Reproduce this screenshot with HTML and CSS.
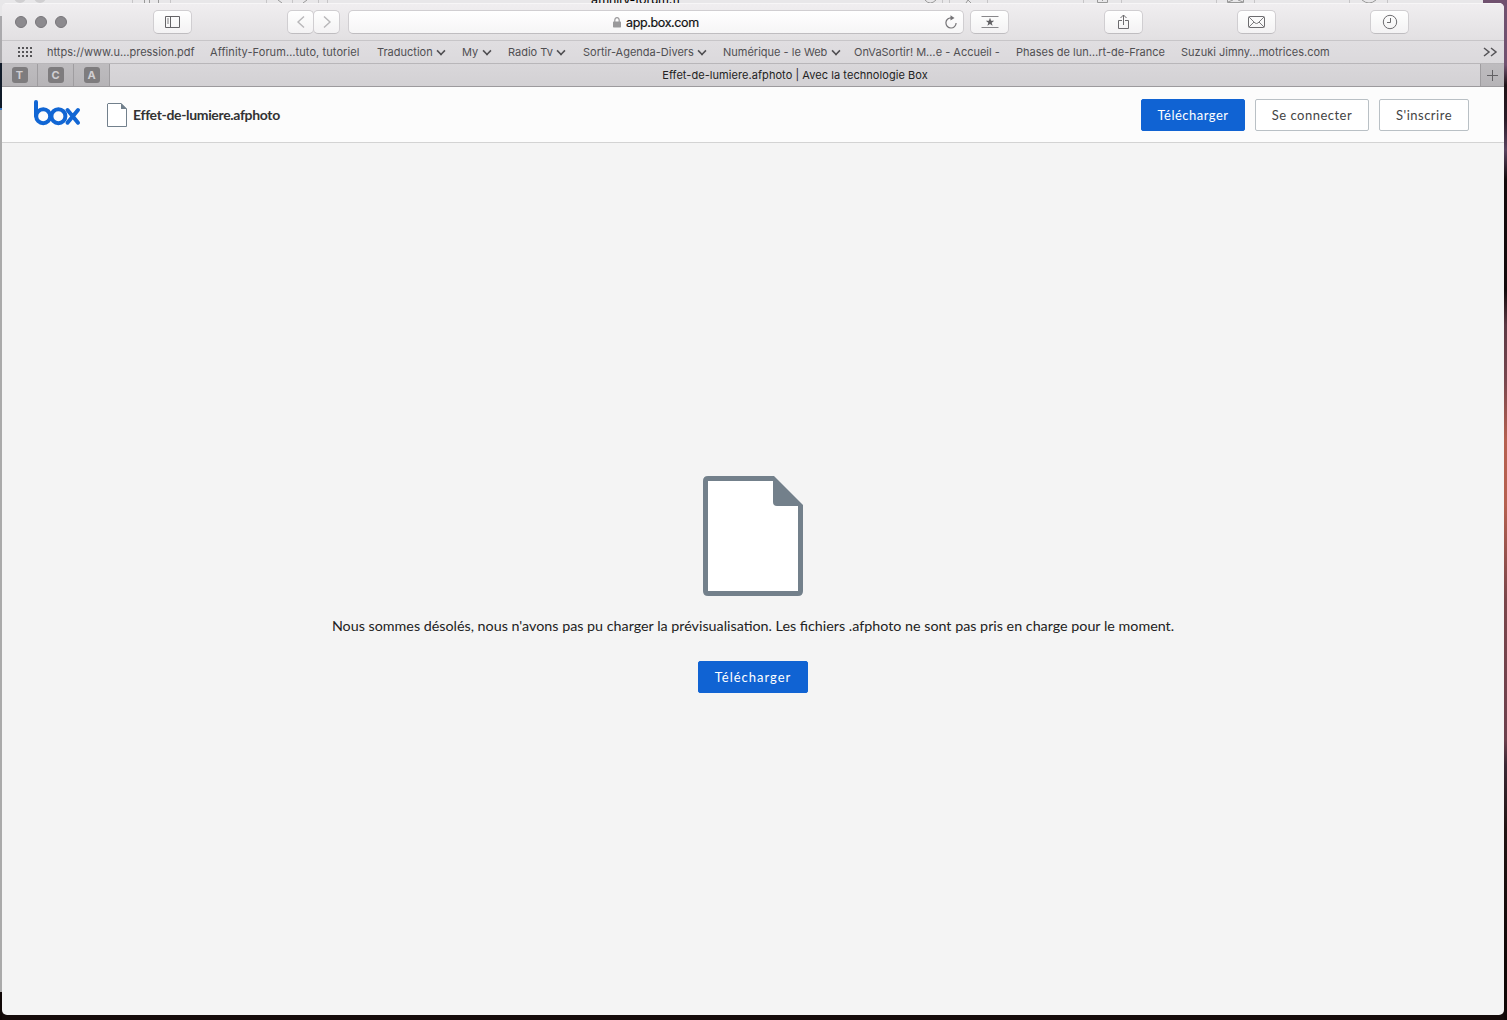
FILE: index.html
```html
<!DOCTYPE html>
<html lang="fr">
<head>
<meta charset="utf-8">
<title>Effet-de-lumiere.afphoto | Avec la technologie Box</title>
<link rel="stylesheet" href="styles.css">
</head>
<body>
<div class="behind">
  <span class="behind-address">affinity-forum.fr</span>
  <svg class="behind-controls" width="1483" height="3" fill="none" stroke="#777">
    <g fill="#d0cfd1" stroke="none"><circle cx="20" cy="-3" r="6"/><circle cx="40" cy="-3" r="6"/></g>
    <path d="M132.500 0V3M170.500 0V3M266.500 0V3M292.500 0V3M318.500 0V3M327.500 0V3M942.500 0V3M949.500 0V3M987.500 0V3M1083.500 0V3M1121.500 0V3M1216.500 0V3M1254.500 0V3M1349.500 0V3M1387.500 0V3" stroke="#c6c5c7"/>
    <path d="M144.500 0V3M149.500 0V3M158.500 0V3M278 0L282 3M307 0L303 3M925 0Q930 6 936 0M966 3L968 0L971 3M1097.500 0V2.500H1107.500V0M1102.500 0V1M1227.500 0V2.500H1243.500V0M1228 2L1233 0M1243 2L1238 0M1362 0Q1369 6 1376 0" stroke="#999"/>
  </svg>
</div>
<div class="window">
  <div class="toolbar">
    <div class="lights"><i></i><i></i><i></i></div>
    <div class="tool sidebar"><svg width="16" height="14" fill="none" stroke="#646366"><path d="M.5 1.500H14.500V12.500H.5ZM5.500 1.500V12.500"/><path d="M2 4H4M2 6H4M2 8H4" stroke-width=".8"/></svg></div>
    <div class="history">
      <div class="tool nav"><svg width="10" height="14" fill="none" stroke="#b8b7b9" stroke-width="1.400"><path d="M8 1.500L2 7L8 12.500"/></svg></div>
      <div class="tool nav"><svg width="10" height="14" fill="none" stroke="#b8b7b9" stroke-width="1.400"><path d="M2 1.500L8 7L2 12.500"/></svg></div>
    </div>
    <div class="address">
      <svg width="8" height="11"><path d="M1.800 5V3.200Q1.800 .7 4 .7T6.200 3.200V5" fill="none" stroke="#9a999b" stroke-width="1.200"/><rect y="4.500" width="8" height="6" rx=".7" fill="#9a999b"/></svg>
      <span>app.box.com</span>
      <svg class="reload" width="14" height="15" fill="none" stroke="#747376" stroke-width="1.200"><path d="M7 2.800A5.100 5.100 0 1 0 12.100 8"/><path d="M6.500 .3L10.500 3L6.500 5.600Z" fill="#747376" stroke="none"/></svg>
    </div>
    <div class="tool star"><svg width="18" height="14"><path d="M.5 1.500H17.500M.5 12.500H17.500" stroke="#88878a"/><path d="M9 2.800L10.100 5.800H13.200L10.700 7.700L11.600 10.800L9 9L6.400 10.800L7.300 7.700L4.800 5.800H7.900Z" fill="#626164"/></svg></div>
    <div class="tool share"><svg width="11" height="16" fill="none" stroke="#6d6c6f"><path d="M4 6.500H.5V14.500H10.500V6.500H7M5.500 11V1M2.500 4L5.500 1L8.500 4"/></svg></div>
    <div class="tool mail"><svg width="18" height="14" fill="none" stroke="#6d6c6f"><rect x=".5" y="1.500" width="16" height="11" rx="1"/><path d="M1 2L7 8Q8.500 9 10 8L16 2M1 12L6 7M16 12L11 7" stroke-width=".9"/></svg></div>
    <div class="tool clock"><svg width="16" height="16" fill="none" stroke="#6d6c6f"><circle cx="8" cy="8" r="6.700"/><path d="M8.500 4V8.500H5"/></svg></div>
  </div>
  <div class="bookmarks">
    <svg class="dots" width="15" height="12" stroke="#555457" stroke-width="2" stroke-dasharray="2 2"><path d="M0 2H14M0 6H14M0 10H14"/></svg>
    <span>https://www.u…pression.pdf</span>
    <span class="forum">Affinity-Forum…tuto, tutoriel</span>
    <span class="menu">Traduction</span>
    <span class="menu">My</span>
    <span class="menu">Radio Tv</span>
    <span class="menu">Sortir-Agenda-Divers</span>
    <span class="menu">Numérique - le Web</span>
    <span>OnVaSortir! M…e - Accueil -</span>
    <span>Phases de lun…rt-de-France</span>
    <span>Suzuki Jimny…motrices.com</span>
    <svg class="more" width="15" height="10" fill="none" stroke="#555457" stroke-width="1.500"><path d="M1 1L6 5L1 9M8 1L13 5L8 9"/></svg>
  </div>
  <div class="tabs">
    <div class="pin"><b>T</b></div><div class="pin"><b>C</b></div><div class="pin"><b>A</b></div>
    <div class="active-tab"><span>Effet-de-lumiere.afphoto | Avec la technologie Box</span></div>
    <div class="add-tab"><svg width="11" height="11" stroke="#626164"><path d="M0 5.500H11M5.500 0V11"/></svg></div>
  </div>
  <header class="box-header">
    <svg class="logo" width="48" height="28" fill="none" stroke="#1166d4" stroke-width="4" stroke-linecap="round"><path d="M3 3V17"/><circle cx="10.200" cy="17.200" r="7"/><circle cx="25.400" cy="17.200" r="7"/><path d="M34.500 11L45 23.700M45 11L34.500 23.700"/></svg>
    <svg class="file-small" width="20" height="24"><path d="M1 .5H14L19.500 6V23.500H.5V1Z" fill="#fff" stroke="#72808c"/><path d="M14 0L20 6H14Z" fill="#72808c"/></svg>
    <span class="file-name">Effet-de-lumiere.afphoto</span>
    <button class="btn primary download">Télécharger</button>
    <button class="btn login">Se connecter</button>
    <button class="btn signup">S'inscrire</button>
  </header>
  <main class="preview">
    <svg width="100" height="120"><path d="M5 0H71L100 29V115Q100 120 95 120H5Q0 120 0 115V5Q0 0 5 0Z" fill="#73808b"/><path d="M5 5H70V26Q70 30 74 30H95V115H5Z" fill="#fff"/></svg>
    <p class="message">Nous sommes désolés, nous n'avons pas pu charger la prévisualisation. Les fichiers .afphoto ne sont pas pris en charge pour le moment.</p>
    <button class="btn primary center">Télécharger</button>
  </main>
</div>
</body>
</html>
```
FILE: styles.css
```css
* { box-sizing: border-box; }
body {
  margin: 0;
  width: 1507px;
  height: 1020px;
  overflow: hidden;
  position: relative;
  padding: 3px 3px 5px 2px;
  font-family: Inter, "Liberation Sans", sans-serif;
  background:
    linear-gradient(#aaa9ac 0 63px, #101b29 63px 108px, #3c78bd 108px 110px, #aaa 110px 992px, #100706 992px) 0 0 / 2px 100% no-repeat,
    linear-gradient(#70516f 0, #70516f 65px, #201317 85px, #2b1c28 120px, #5a4460 150px, #130a0b 180px, #130a0b 290px, #5b3843 325px, #78464e 380px, #b5604f 440px, #b5604f 505px, #7a454a 600px, #6c3f4c 740px, #3b2834 765px, #211312 830px, #100706 960px) 100% 0 / 3px 100% no-repeat,
    linear-gradient(#70516f 0 16px, #150b0a 16px);
}
svg { display: block; flex: none; }
.behind {
  position: absolute;
  top: 0;
  left: 0;
  width: 1483px;
  height: 16px;
  background: #e8e7e9;
}
.behind-controls { position: absolute; top: 0; left: 0; }
.behind-address {
  position: absolute;
  top: -8px;
  left: 591px;
  font-size: 12.5px;
  line-height: 15px;
  letter-spacing: -.2px;
}
.window {
  position: relative;
  width: 1502px;
  height: 1012px;
  overflow: hidden;
  border-radius: 5px;
  background: #f4f4f4;
  display: flex;
  flex-direction: column;
}
.toolbar {
  height: 38px;
  flex: none;
  display: flex;
  align-items: center;
  padding-left: 13px;
  background: linear-gradient(#f0eef0, #e2e0e2);
  border-top: 1px solid #f7f6f7;
  border-bottom: 1px solid #c7c5c8;
}
.lights { display: flex; gap: 8px; width: 138px; }
.lights i { width: 12px; height: 12px; border-radius: 50%; background: #8c8a8e; border: 1px solid #777579; }
.tool {
  width: 39px;
  height: 24px;
  border: 1px solid #d0ced1;
  border-bottom-color: #bfbdc0;
  border-radius: 5px;
  background: linear-gradient(#fff, #f3f2f3);
  display: flex;
  align-items: center;
  justify-content: center;
}
.history { display: flex; margin-left: 95px; }
.nav { width: 27px; }
.nav + .nav { margin-left: -1px; }
.address {
  width: 616px;
  height: 24px;
  margin-left: 8px;
  padding: 0 5px 0 264px;
  display: flex;
  align-items: center;
  gap: 5px;
  border: 1px solid #d0ced1;
  border-bottom-color: #bfbdc0;
  border-radius: 5px;
  background: linear-gradient(#fff, #f6f5f6);
  font-size: 12.5px;
  color: #111;
}
.address span { width: 73px; white-space: nowrap; letter-spacing: -.36px; -webkit-text-stroke: .2px #111; }
.reload { margin-left: auto; }
.star { margin-left: 6px; }
.share { margin-left: 95px; }
.mail { margin-left: 94px; }
.clock { margin-left: 94px; }
.bookmarks {
  height: 23px;
  flex: none;
  display: grid;
  grid-template-columns: 30px 163px 167px 85px 46px 75px 140px 131px 162px 165px 1fr 21px;
  align-items: center;
  padding-left: 15px;
  background: linear-gradient(#e0dee1, #dbd9dc);
  border-bottom: 1px solid #b8b6b9;
  font-size: 11px;
  line-height: 14px;
  color: #504f52;
  white-space: nowrap;
}
.dots { margin-left: 1px; }
.forum { letter-spacing: .09px; }
.menu { display: flex; align-items: center; gap: 5px; }
.menu::after {
  content: "";
  width: 6px;
  height: 6px;
  margin: -3px 0 0 -.5px;
  border: solid #504f52;
  border-width: 0 2px 2px 0;
  transform: rotate(45deg) scale(.8);
}
.tabs {
  height: 23px;
  flex: none;
  display: flex;
  background: linear-gradient(#d9d7da, #d3d1d4);
  border-bottom: 1px solid #9c9a9d;
}
.pin, .add-tab { display: flex; align-items: center; justify-content: center; background: linear-gradient(#bebcbf, #b6b4b7); }
.pin { width: 36px; border-right: 1px solid #9f9da0; }
.pin b {
  width: 16px;
  height: 16px;
  border-radius: 3px;
  background: #7e7c7e;
  color: #d0ced1;
  font-size: 11px;
  line-height: 16px;
  text-align: center;
}
.active-tab { flex: 1; display: flex; align-items: center; justify-content: center; font-size: 11px; letter-spacing: .06px; color: #222; }
.add-tab { width: 24px; border-left: 1px solid #9f9da0; }
.box-header {
  height: 56px;
  flex: none;
  display: flex;
  align-items: center;
  padding: 0 35px 0 31px;
  background: #fcfcfc;
  border-bottom: 1px solid #d3d3d3;
  font-family: Lato, sans-serif;
}
.logo { margin-top: -3px; }
.file-small { margin-left: 26px; }
.file-name { margin-left: 6px; font-size: 14px; font-weight: 700; letter-spacing: -.34px; color: #333; white-space: nowrap; }
.btn {
  height: 32px;
  padding: 0;
  border: 1px solid #b9c0c5;
  border-radius: 2px;
  background: #fff;
  font: 13px Lato, sans-serif;
  letter-spacing: .5px;
  color: #444;
  white-space: nowrap;
}
.primary { background: #1063d3; border-color: #1063d3; color: #fff; }
.download { width: 104px; margin-left: auto; }
.login { width: 114px; margin-left: 10px; }
.signup { width: 90px; margin-left: 10px; }
.preview {
  flex: 1;
  display: flex;
  flex-direction: column;
  align-items: center;
  padding-top: 333px;
  font-family: Lato, sans-serif;
}
.message { margin: 20px 0 25px; font-size: 14.3px; line-height: 20px; color: #222; white-space: nowrap; }
.center { width: 110px; letter-spacing: 1px; }
```
